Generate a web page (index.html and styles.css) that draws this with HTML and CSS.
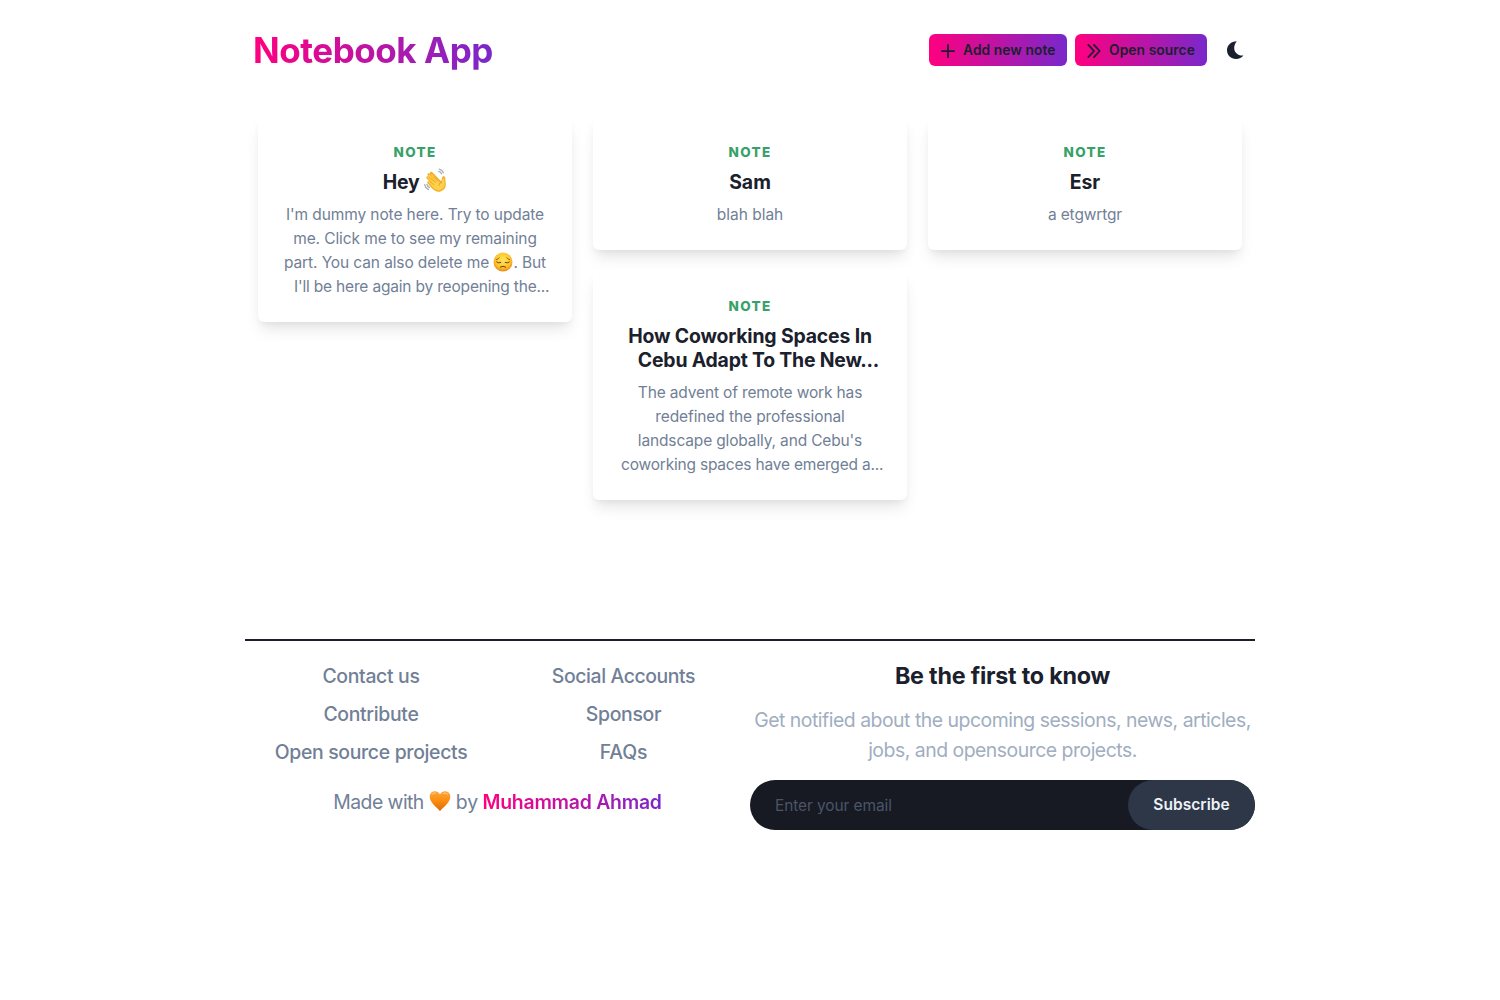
FILE: index.html
```html
<!DOCTYPE html>
<html lang="en">
<head>
<meta charset="utf-8">
<title>Notebook App</title>
<link rel="stylesheet" href="styles.css">
</head>
<body>
<div class="container">
  <header class="header">
    <h1 class="brand"><span class="gradient-text">Notebook App</span></h1>
    <div class="actions">
      <button class="btn btn-add"><svg class="icon" viewBox="0 0 16 16"><path d="M8 1v14M1 8h14"/></svg><span>Add new note</span></button>
      <button class="btn btn-source"><svg class="icon" viewBox="0 0 16 16"><path d="M1.500 1l6.500 7-6.500 7M8 1l6.500 7L8 15"/></svg><span>Open source</span></button>
      <button class="theme" aria-label="Toggle theme"><svg viewBox="0 0 17 18" width="17" height="18"><path d="M9.800.2C4 .2 0 4.300 0 9.200 0 14 4 18 9 18c3.200 0 5.700-1.300 7.400-3.500C11 15 7.200 11.500 7.200 7 7.200 4.500 8.100 2 9.800.2z"/></svg></button>
    </div>
  </header>

  <main class="notes">
    <div class="column">
      <article class="card">
        <span class="tag">NOTE</span>
        <h2 class="card-title"><span class="w-hey">Hey</span> <svg class="emoji emoji-wave" viewBox="0 .5 21 22.500" role="img" aria-label="wave">
          <g fill="none" stroke="#a9adb3" stroke-width="1.200" stroke-linecap="round"><path d="M14 1.600q2.700.7 3.600 3.300M13.400 3.600q1.800.5 2.500 2.100M.8 15.600q.6 3 3.400 4.300M2.800 15.300q.6 1.900 2.300 2.800"/></g>
          <path fill="#f2b02a" d="M14.500 21.800c-2.700.5-5.100-.8-7.500-3.300l-3.600-4.200c-1-1.300.5-2.500 1.700-1.400l-2.500-3c-1-1.300.6-2.700 1.800-1.400L3.500 7.100c-1-1.400.8-2.700 1.900-1.400l1 1.100-.7-.9c-1-1.500.8-2.900 2-1.500l8.100 8.300.5-3.300c.3-2.100 3-2 3 .2-.1 3.600 2.800 9.800-4.800 12.200z"/>
          <path fill="#ffd04a" d="M14.300 20.500c-2.400.3-4.600-1-6.600-3.200l-3.900-4.600 1-.6 3.200 3-4.700-6 .9-.6 5.200 5.500-5.200-7 .9-.6 6 6.600-4.600-6.200.8-.6 8.700 9 .9-4.800c.3-1 1.500-.8 1.500.3.200 4.400 1.600 7.900-4.100 9.800z"/>
          <path d="M6 12.900l3.200 3M6.500 9.700l4.300 4.200M8.600 8.300l4 4.200M16.200 12.800q-2.700.7-2.400 3.700" fill="none" stroke="#dc941d" stroke-width=".6"/>
        </svg></h2>
        <p class="card-text">
          <span class="line l1">I'm dummy note here. Try to update</span>
          <span class="line l2">me. Click me to see my remaining</span>
          <span class="line l3">part. You can also delete me <svg class="emoji emoji-pensive" viewBox="0 0 20 20" role="img" aria-label="pensive">
            <defs><radialGradient id="face" cx=".5" cy=".4" r=".6"><stop offset="0" stop-color="#ffe75a"/><stop offset=".65" stop-color="#fdc52e"/><stop offset="1" stop-color="#e8891a"/></radialGradient></defs>
            <circle cx="10" cy="10" r="9.500" fill="url(#face)"/>
            <g fill="none" stroke="#6b3d10" stroke-linecap="round"><path stroke-width=".7" d="M3.300 7.700q2-.4 3-2M16.700 7.700q-2-.4-3-2"/><path stroke-width="1" d="M3.700 10q2 1.700 4.100.5M16.300 10q-2 1.700-4.100.5M7.400 15q2.600-1.600 5.200 0"/></g>
          </svg>. But</span>
          <span class="line l4">I'll be here again by reopening the...</span>
        </p>
      </article>
    </div>
    <div class="column">
      <article class="card">
        <span class="tag">NOTE</span>
        <h2 class="card-title">Sam</h2>
        <p class="card-text"><span class="line">blah blah</span></p>
      </article>
      <article class="card">
        <span class="tag">NOTE</span>
        <h2 class="card-title"><span class="line t1">How Coworking Spaces In</span><span class="line t2">Cebu Adapt To The New...</span></h2>
        <p class="card-text">
          <span class="line l6">The advent of remote work has</span>
          <span class="line l7">redefined the professional</span>
          <span class="line l8">landscape globally, and Cebu's</span>
          <span class="line l9">coworking spaces have emerged a...</span>
        </p>
      </article>
    </div>
    <div class="column">
      <article class="card">
        <span class="tag">NOTE</span>
        <h2 class="card-title">Esr</h2>
        <p class="card-text"><span class="line l10">a etgwrtgr</span></p>
      </article>
    </div>
  </main>

  <footer class="footer">
    <div class="footer-left">
      <nav class="links">
        <div class="link-col"><a>Contact us</a><a>Contribute</a><a>Open source projects</a></div>
        <div class="link-col"><a class="social">Social Accounts</a><a>Sponsor</a><a class="faqs">FAQs</a></div>
      </nav>
      <p class="credit"><span class="made">Made with</span> <svg class="emoji emoji-heart" viewBox="0 0 22 22" role="img" aria-label="heart">
        <defs><linearGradient id="heart" x1="0" y1="0" x2="0" y2="1"><stop offset="0" stop-color="#ffa63b"/><stop offset=".5" stop-color="#fb8c0c"/><stop offset="1" stop-color="#d96a08"/></linearGradient></defs>
        <path fill="url(#heart)" d="M11 21.200C8.500 17.600.7 13 .7 6.800.7 3.300 3 1.200 5.900 1.200c2.400 0 4.200 1.300 5.100 3.300.9-2 2.700-3.300 5.100-3.300 2.900 0 5.200 2.100 5.200 5.600 0 6.200-7.800 10.800-10.300 14.400z"/>
        <path d="M3 4.200q1.300-1.500 3.300-1.200M14.500 3.400q2.300-1.200 4 .6" fill="none" stroke="#ffd08c" stroke-width="1" stroke-linecap="round"/>
      </svg> <span class="by">by</span> <strong class="gradient-text author">Muhammad Ahmad</strong></p>
    </div>
    <section class="newsletter">
      <h3 class="news-title">Be the first to know</h3>
      <p class="news-text"><span class="line">Get notified about the upcoming sessions, news, articles,</span><span class="line">jobs, and opensource projects.</span></p>
      <form class="subscribe">
        <input class="email" type="text" placeholder="Enter your email">
        <button class="submit" type="button">Subscribe</button>
      </form>
    </section>
  </footer>
</div>
</body>
</html>
```
FILE: styles.css
```css
* { box-sizing: border-box; }
body { margin: 0; font-family: Inter, "Liberation Sans", sans-serif; font-size: 16px; line-height: 1.5; color: #1a202c; background: #fff; }
h1, h2, h3, p { margin: 0; }
button, input { font-family: inherit; border: 0; padding: 0; margin: 0; }
.container { width: 1010px; margin: 0 auto; }
.gradient-text { background: linear-gradient(to left, #7928ca, #ff0080); -webkit-background-clip: text; background-clip: text; color: transparent; }

.header { display: flex; justify-content: space-between; align-items: center; height: 100px; padding: 0 0 0 8px; }
.brand { font-size: 35px; line-height: 43px; font-weight: 700; letter-spacing: -0.45px; white-space: nowrap; }
.actions { display: flex; align-items: center; gap: 8px; }
.btn { display: flex; align-items: center; gap: 8px; height: 32px; padding: 0 12px; border-radius: 6px; background: linear-gradient(to left, #7928ca, #ff0080); color: #1a202c; font-size: 13.8px; line-height: 20px; font-weight: 600; letter-spacing: 0.07px; white-space: nowrap; }
.btn span { margin-top: -1px; }
.btn-add { width: 138px; }
.btn-source { width: 132px; }
.icon { width: 14px; height: 14px; margin-top: 2px; flex: none; fill: none; stroke: currentColor; stroke-width: 2; stroke-linecap: round; stroke-linejoin: round; }
.theme { display: flex; align-items: center; justify-content: center; width: 40px; height: 40px; background: none; fill: #1a202c; }

.notes { display: grid; grid-template-columns: repeat(3, 314px); gap: 21px; align-items: start; height: 539px; padding: 17px 13px 0; }
.column { display: flex; flex-direction: column; gap: 21px; }
.card { display: flex; flex-direction: column; gap: 8px; padding: 24px; border-radius: 6px; text-align: center; background: #fff; box-shadow: 0 10px 15px -3px rgba(0,0,0,.1), 0 4px 6px -2px rgba(0,0,0,.05); }
.tag { padding-top: 1px; font-size: 13.5px; line-height: 20px; font-weight: 800; letter-spacing: 1.3px; color: #38a169; }
.tag { line-height: 21px; margin-bottom: -1px; }
.card-title { font-size: 19.4px; line-height: 24px; font-weight: 700; white-space: nowrap; }
.card-text { padding-top: 1px; margin-bottom: -1px; font-size: 15.5px; line-height: 24px; color: #718096; white-space: nowrap; }
.line { display: block; }
.w-hey { letter-spacing: -0.2px; }
.t1 { letter-spacing: -0.15px; }
.t2 { letter-spacing: -0.19px; padding-left: 17px; }
.l1, .l2, .l7 { letter-spacing: -0.1px; }
.l3 { letter-spacing: -0.11px; }
.l4 { letter-spacing: -0.18px; padding-left: 12px; }
.l6, .l8, .l10 { letter-spacing: -0.15px; }
.l9 { letter-spacing: -0.2px; padding-left: 4px; }
.emoji { vertical-align: top; }
.emoji-wave { width: 25px; height: 25px; margin: -2px -1px 0 -1px; }
.emoji-pensive { width: 20px; height: 20px; margin-top: 1px; }
.emoji-heart { width: 22px; height: 22px; margin-top: 3px; }

.footer { display: grid; grid-template-columns: 505px 505px; border-top: 2px solid #1a202c; }
.links { display: grid; grid-template-columns: 252px 253px; padding-top: 20px; }
.link-col { display: flex; flex-direction: column; gap: 8px; align-items: center; color: #718096; font-size: 19.4px; line-height: 30px; font-weight: 500; letter-spacing: -0.32px; white-space: nowrap; }
.social { letter-spacing: -0.4px; }
.faqs { letter-spacing: -0.1px; }
.credit { padding-top: 20px; text-align: center; font-size: 19.4px; line-height: 30px; color: #718096; white-space: nowrap; }
.made { letter-spacing: -0.55px; }
.by { margin: 0 -1px; }
.author { font-weight: 600; letter-spacing: -0.24px; }
.newsletter { text-align: center; padding-top: 20px; }
.news-title { font-size: 23.3px; line-height: 29px; font-weight: 700; letter-spacing: -0.22px; }
.news-text { margin-top: 15px; font-size: 19.4px; line-height: 30px; letter-spacing: -0.48px; color: #a0aec0; white-space: nowrap; }
.subscribe { display: flex; width: 505px; height: 50px; margin-top: 15px; border-radius: 25px; background: #171923; overflow: hidden; }
.email { flex: 1; min-width: 0; padding: 0 25px; background: transparent; font-size: 15.5px; letter-spacing: -0.1px; color: #fff; outline: 0; }
.email::placeholder { color: #4a5568; opacity: 1; }
.submit { width: 127px; height: 50px; padding-bottom: 2px; border-radius: 25px; background: #2d3748; color: #edf2f7; font-size: 15.5px; font-weight: 600; letter-spacing: 0.05px; }
```
